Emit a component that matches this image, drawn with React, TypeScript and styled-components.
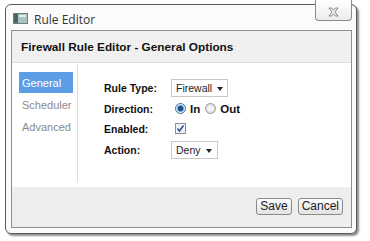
import React from "react";
import styled, { createGlobalStyle } from "styled-components";

const Global = createGlobalStyle`
    html, body {
        margin: 0;
        padding: 0;
        background: #ffffff;
    }
    body {
        font-family: "Liberation Sans", "DejaVu Sans", sans-serif;
        color: #111;
    }
`

const Page = styled.div`
    padding: 4px 0 0 5px;
    width: 370px;
    height: 241px;
    box-sizing: border-box;
`

const Window = styled.div`
    width: 352px;
    height: 230px;
    box-sizing: border-box;
    border: 1px solid #5a5a5a;
    border-radius: 6px;
    background: #fbfbfb;
    box-shadow: 2px 2px 2px rgba(0, 0, 0, 0.45);
    display: flex;
    flex-direction: column;
    padding: 0 4px 5px 5px;
`

const TitleBar = styled.div`
    height: 25px;
    display: flex;
    align-items: flex-start;
    flex-shrink: 0;
`

const TitleIcon = styled.svg`
    margin: 8px 0 0 2px;
    width: 15px;
    height: 11px;
`

const TitleText = styled.span`
    margin: 6px 0 0 6px;
    font-family: "Open Sans", "Liberation Sans", sans-serif;
    font-size: 12px;
    color: #333;
`

const CloseButton = styled.div`
    margin: -5px 0 0 auto;
    width: 37px;
    height: 21px;
    box-sizing: border-box;
    border: 1px solid #8c8c8c;
    border-top: none;
    border-radius: 0 0 4px 4px;
    background: linear-gradient(#ffffff, #ececec);
    display: flex;
    align-items: center;
    justify-content: center;
    padding-top: 4px;
`

const Panel = styled.div`
    flex: 1;
    border: 1px solid #8e8e8e;
    background: #ffffff;
    display: flex;
    flex-direction: column;
`

const Header = styled.div`
    height: 31px;
    flex-shrink: 0;
    background: #f0f0f0;
    border-bottom: 1px solid #dedede;
    display: flex;
    align-items: center;
    padding-left: 9px;
    font-size: 11.8px;
    font-weight: bold;
    color: #111;
`

const Body = styled.div`
    flex: 1;
    display: flex;
`

const Nav = styled.div`
    width: 66px;
    box-sizing: border-box;
    margin: 2px 0 5px;
    border-right: 1px solid #dcdcdc;
    padding: 7px 0 0 7px;
    display: flex;
    flex-direction: column;
    gap: 1px;
`

const NavItem = styled.div<{ $active?: boolean }>`
    width: 54px;
    height: 21px;
    box-sizing: border-box;
    padding-left: 3px;
    display: flex;
    align-items: center;
    font-size: 11px;
    color: ${p => (p.$active ? "#ffffff" : "#8a8a8a")};
    background: ${p => (p.$active ? "#5c9ee6" : "transparent")};
`

const Form = styled.div`
    padding: 15px 0 0 26px;
    display: grid;
    grid-template-columns: 67px auto;
    grid-auto-rows: 20.5px;
    align-items: center;
`

const Label = styled.div`
    font-size: 10.5px;
    font-weight: bold;
    color: #111;
`

const Select = styled.div<{ $width: number }>`
    width: ${p => p.$width}px;
    height: 18px;
    box-sizing: border-box;
    border: 1px solid #c8c8c8;
    display: flex;
    align-items: center;
    justify-content: space-between;
    padding: 0 6px 0 4px;
    font-size: 10.5px;
    color: #222;
`

const Caret = styled.span`
    width: 0;
    height: 0;
    flex-shrink: 0;
    border-left: 3.5px solid transparent;
    border-right: 3.5px solid transparent;
    border-top: 4px solid #222;
    margin: 2px 0 0 5px;
`

const RadioGroup = styled.div`
    display: flex;
    align-items: center;
    padding-left: 4px;
`

const Radio = styled.span<{ $checked?: boolean }>`
    width: 11px;
    height: 11px;
    box-sizing: border-box;
    border-radius: 50%;
    border: 1px solid ${p => (p.$checked ? "#3b6fa8" : "#9a9a9a")};
    background: ${p => (p.$checked
        ? "radial-gradient(circle, #1c4f8c 0 2.5px, #6fa7dc 3px, #dfeaf5 4px)"
        : "radial-gradient(circle, #f4f4f4 0 2px, #d6d6d6 5px)")};
    margin-right: 4px;
`

const RadioText = styled.span`
    font-size: 11.5px;
    font-weight: bold;
    margin-right: 5px;
`

const Check = styled.svg`
    margin-left: 4px;
    width: 11px;
    height: 11px;
`

const Footer = styled.div`
    height: 40px;
    flex-shrink: 0;
    background: #eeeeee;
    display: flex;
    justify-content: flex-end;
    align-items: flex-start;
    gap: 6px;
    padding: 11px 8px 0 0;
    box-sizing: border-box;
`

const Button = styled.button`
    height: 17px;
    padding: 0 3px;
    border: 1px solid #8a8a8a;
    border-radius: 3px;
    background: linear-gradient(#fdfdfd, #e2e2e2);
    font-family: "Liberation Sans", sans-serif;
    font-size: 12px;
    color: #222;
    line-height: 15px;
`

export default function App() {
    return <Page>
        <Global />
        <Window>
            <TitleBar>
                <TitleIcon viewBox="0 0 15 11">
                    <rect x="0.5" y="0.5" width="14" height="10" fill="#a9c3c0" stroke="#6a7f80" />
                    <rect x="1" y="1" width="4" height="9" fill="#4d6466" />
                    <rect x="6" y="2" width="7" height="2" fill="#e5eeee" />
                </TitleIcon>
                <TitleText>Rule Editor</TitleText>
                <CloseButton>
                    <svg width="11" height="10" viewBox="0 0 11 10">
                        <path d="M1 1 L3.5 1 L5.5 3.3 L7.5 1 L10 1 L7 5 L10 9 L7.5 9 L5.5 6.7 L3.5 9 L1 9 L4 5 Z"
                              fill="#f4f4f4" stroke="#7a7a7a" strokeWidth="0.9" strokeLinejoin="round" />
                    </svg>
                </CloseButton>
            </TitleBar>
            <Panel>
                <Header>Firewall Rule Editor - General Options</Header>
                <Body>
                    <Nav>
                        <NavItem $active>General</NavItem>
                        <NavItem>Scheduler</NavItem>
                        <NavItem>Advanced</NavItem>
                    </Nav>
                    <Form>
                        <Label>Rule Type:</Label>
                        <Select $width={57}>Firewall<Caret /></Select>
                        <Label>Direction:</Label>
                        <RadioGroup>
                            <Radio $checked /><RadioText>In</RadioText>
                            <Radio /><RadioText>Out</RadioText>
                        </RadioGroup>
                        <Label>Enabled:</Label>
                        <div>
                            <Check viewBox="0 0 11 11">
                                <rect x="0.5" y="0.5" width="10" height="10" fill="#eef2f8" stroke="#8e8f8f" />
                                <path d="M2.5 5.5 L4.5 8 L8.5 2.5" fill="none" stroke="#2a4f94" strokeWidth="1.5" />
                            </Check>
                        </div>
                        <Label>Action:</Label>
                        <Select $width={47}>Deny<Caret /></Select>
                    </Form>
                </Body>
                <Footer>
                    <Button>Save</Button>
                    <Button>Cancel</Button>
                </Footer>
            </Panel>
        </Window>
    </Page>
}
